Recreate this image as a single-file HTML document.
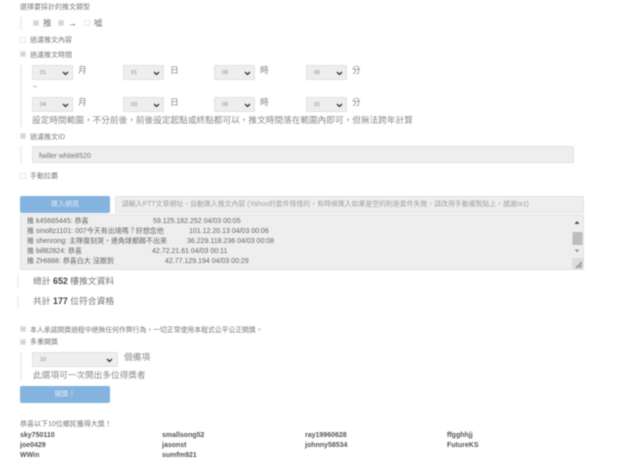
<!DOCTYPE html>
<html lang="zh-Hant">
<head>
<meta charset="utf-8">
<style>
html,body{margin:0;padding:0;background:#fff;}
body{width:640px;height:470px;position:relative;overflow:hidden;font-family:"Liberation Sans","Noto Sans CJK TC",sans-serif;color:#777;}
#w{position:absolute;left:0;top:0;width:640px;height:470px;filter:blur(.4px);}
.t{position:absolute;white-space:nowrap;line-height:12px;height:12px;}
.s7{font-size:7px;}
.s8{font-size:8.66px;color:#888;}
.bar{position:absolute;width:2px;background:#f0f0f0;}
.cb{position:absolute;width:4px;height:4px;border:1px solid #e8e8e8;background:#fff;box-sizing:content-box;}
.cb.on{background:#d4d4d4;border-color:#e4e4e4;}
.sel{position:absolute;height:15px;width:41px;background:#eee;border:1px solid #e2e2e2;box-sizing:border-box;font-size:5.5px;line-height:14px;color:#888;padding-left:7px;}
.sel svg{position:absolute;right:3px;top:5px;}
.inp{position:absolute;background:#eee;border:1px solid #e2e2e2;box-sizing:border-box;border-radius:1px;}
.btn{position:absolute;left:20px;width:90px;height:17px;background:#83b3de;border-radius:2px;color:#dfeaf5;font-size:7px;line-height:18px;text-align:center;}
.ta{font-size:7px;color:#666;}
.n{font-size:7px;font-weight:bold;color:#555;}
b{color:#444;}
</style>
</head>
<body>
<div id="w">
<div class="t s7" style="left:20px;top:2px;">選擇要採計的推文類型</div>
<div class="bar" style="left:20px;top:17px;height:13px;"></div>
<div class="cb on" style="left:33px;top:20px;"></div>
<div class="t" style="left:43px;top:17px;font-size:8.6px;">推</div>
<div class="cb on" style="left:58px;top:20px;"></div>
<div class="t" style="left:68px;top:17px;font-size:8.6px;color:#444;">→</div>
<div class="cb" style="left:84px;top:20px;"></div>
<div class="t" style="left:94px;top:17px;font-size:8.6px;">噓</div>

<div class="cb" style="left:20px;top:37px;"></div>
<div class="t s7" style="left:30px;top:35px;">過濾推文內容</div>
<div class="cb on" style="left:20px;top:51px;"></div>
<div class="t s7" style="left:30px;top:50px;">過濾推文時間</div>

<div class="bar" style="left:20px;top:65px;height:62px;"></div>
<div class="sel" style="left:32px;top:65px;">01<svg width="7" height="5" viewBox="0 0 7 5"><path d="M1 1l2.500 2.500L6 1" fill="none" stroke="#333" stroke-width="1.300"/></svg></div>
<div class="t s8" style="left:78px;top:64px;">月</div>
<div class="sel" style="left:123px;top:65px;">01<svg width="7" height="5" viewBox="0 0 7 5"><path d="M1 1l2.500 2.500L6 1" fill="none" stroke="#333" stroke-width="1.300"/></svg></div>
<div class="t s8" style="left:170px;top:64px;">日</div>
<div class="sel" style="left:214px;top:65px;">00<svg width="7" height="5" viewBox="0 0 7 5"><path d="M1 1l2.500 2.500L6 1" fill="none" stroke="#333" stroke-width="1.300"/></svg></div>
<div class="t s8" style="left:260px;top:64px;">時</div>
<div class="sel" style="left:306px;top:65px;">00<svg width="7" height="5" viewBox="0 0 7 5"><path d="M1 1l2.500 2.500L6 1" fill="none" stroke="#333" stroke-width="1.300"/></svg></div>
<div class="t s8" style="left:352px;top:64px;">分</div>
<div class="t s7" style="left:33px;top:82px;">~</div>
<div class="sel" style="left:32px;top:97px;">04<svg width="7" height="5" viewBox="0 0 7 5"><path d="M1 1l2.500 2.500L6 1" fill="none" stroke="#333" stroke-width="1.300"/></svg></div>
<div class="t s8" style="left:78px;top:96px;">月</div>
<div class="sel" style="left:123px;top:97px;">03<svg width="7" height="5" viewBox="0 0 7 5"><path d="M1 1l2.500 2.500L6 1" fill="none" stroke="#333" stroke-width="1.300"/></svg></div>
<div class="t s8" style="left:170px;top:96px;">日</div>
<div class="sel" style="left:214px;top:97px;">00<svg width="7" height="5" viewBox="0 0 7 5"><path d="M1 1l2.500 2.500L6 1" fill="none" stroke="#333" stroke-width="1.300"/></svg></div>
<div class="t s8" style="left:260px;top:96px;">時</div>
<div class="sel" style="left:306px;top:97px;">01<svg width="7" height="5" viewBox="0 0 7 5"><path d="M1 1l2.500 2.500L6 1" fill="none" stroke="#333" stroke-width="1.300"/></svg></div>
<div class="t s8" style="left:352px;top:96px;">分</div>
<div class="t s8" style="left:32px;top:114px;">設定時間範圍，不分前後，前後設定起點或終點都可以，推文時間落在範圍內即可，但無法跨年計算</div>

<div class="cb on" style="left:20px;top:133px;"></div>
<div class="t s7" style="left:30px;top:132px;">過濾推文ID</div>
<div class="bar" style="left:20px;top:146px;height:17px;"></div>
<div class="inp" style="left:32px;top:146px;width:542px;height:17px;"></div>
<div class="t" style="left:39px;top:151px;font-size:7px;color:#777;">fwiller white8520</div>
<div class="cb" style="left:20px;top:173px;"></div>
<div class="t s7" style="left:30px;top:171px;">手動拉霸</div>

<div class="btn" style="top:196px;">匯入網頁</div>
<div class="inp" style="left:115px;top:196px;width:469px;height:17px;"></div>
<div class="t" style="left:122px;top:199px;font-size:6.9px;color:#a0a0a0;">請輸入PTT文章網址，自動匯入推文內容 (Yahoo的套件怪怪的，有時候匯入如果是空的則是套件失敗，請改用手動複製貼上，感謝orz)</div>

<div class="inp" style="left:20px;top:214px;width:564px;height:56px;"></div>
<div class="t ta" style="left:27px;top:216px;">推 k45665445: 恭喜</div><div class="t ta" style="left:153px;top:216px;">59.125.182.252 04/03 00:05</div>
<div class="t ta" style="left:27px;top:226px;">推 smoltz1101: 007今天有出境嗎？好想念他</div><div class="t ta" style="left:189px;top:226px;">101.12.20.13 04/03 00:06</div>
<div class="t ta" style="left:27px;top:236px;">推 shenrong: 主隊復刻哭，連角球都踢不出來</div><div class="t ta" style="left:187px;top:236px;">36.229.118.236 04/03 00:08</div>
<div class="t ta" style="left:27px;top:246px;">推 bill82824: 恭喜</div><div class="t ta" style="left:152px;top:246px;">42.72.21.61 04/03 00:11</div>
<div class="t ta" style="left:27px;top:256px;">推 ZHI888: 恭喜白大 沒跟到</div><div class="t ta" style="left:165px;top:256px;">42.77.129.194 04/03 00:29</div>
<svg style="position:absolute;left:571px;top:215px;" width="12" height="55" viewBox="0 0 12 55">
<path d="M3.500 9l2.500-3 2.500 3z" fill="#555"/>
<rect x="1.500" y="17" width="10" height="13" fill="#bdbdbd"/>
<path d="M3.500 34.500l2.500 3 2.500-3z" fill="#999"/>
<rect x="1" y="43" width="11" height="11" fill="#ddd"/>
<path d="M5 53l6-6M8 53l3-3" stroke="#777" stroke-width="1" fill="none"/>
</svg>

<div class="bar" style="left:17px;top:275px;height:13px;"></div>
<div class="t" style="left:33px;top:275px;font-size:8.8px;">總計 <b>652</b> 樓推文資料</div>
<div class="bar" style="left:17px;top:295px;height:13px;"></div>
<div class="t" style="left:33px;top:295px;font-size:8.8px;">共計 <b>177</b> 位符合資格</div>

<div class="cb on" style="left:20px;top:326px;"></div>
<div class="t s7" style="left:30px;top:325px;font-size:6.85px;">本人承諾開獎過程中絕無任何作弊行為，一切正常使用本程式公平公正開獎。</div>
<div class="cb on" style="left:20px;top:339px;"></div>
<div class="t s7" style="left:30px;top:337px;">多重開獎</div>
<div class="bar" style="left:20px;top:352px;height:28px;"></div>
<div class="sel" style="left:32px;top:352px;width:86px;">10<svg style="right:4px;top:5px;" width="7" height="5" viewBox="0 0 7 5"><path d="M1 1l2.500 2.500L6 1" fill="none" stroke="#333" stroke-width="1.300"/></svg></div>
<div class="t s8" style="left:124px;top:351px;">個備項</div>
<div class="t s8" style="left:33px;top:369px;">此選項可一次開出多位得獎者</div>
<div class="btn" style="top:386px;">開獎！</div>

<div class="t s7" style="left:20px;top:419px;">恭喜以下10位鄉民獲得大獎！</div>
<div class="t n" style="left:20px;top:430px;">sky750110</div>
<div class="t n" style="left:162px;top:430px;">smallsong52</div>
<div class="t n" style="left:305px;top:430px;">ray19960628</div>
<div class="t n" style="left:447px;top:430px;">ffgghhjj</div>
<div class="t n" style="left:20px;top:440px;">joe0429</div>
<div class="t n" style="left:162px;top:440px;">jasonst</div>
<div class="t n" style="left:305px;top:440px;">johnny58534</div>
<div class="t n" style="left:447px;top:440px;">FutureKS</div>
<div class="t n" style="left:20px;top:450px;">WWin</div>
<div class="t n" style="left:162px;top:450px;">sumfm921</div>
</div>
</body>
</html>
